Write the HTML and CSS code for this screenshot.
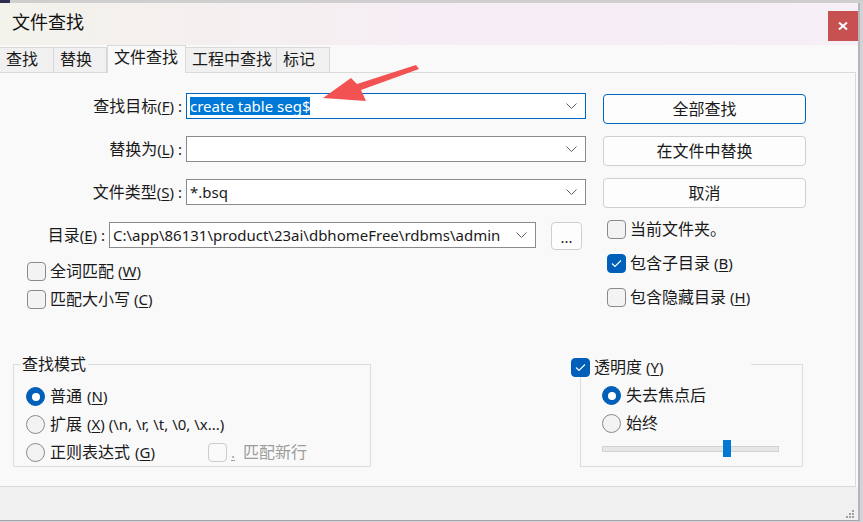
FILE: index.html
```html
<!DOCTYPE html>
<html lang="zh-CN">
<head>
  <meta charset="UTF-8">
  <title>文件查找</title>
  <link rel="stylesheet" href="styles.css">
</head>
<body>
  <!-- 后面编辑器露出的一条 -->
  <div class="editor-edge"></div>

  <div class="window">
    <div class="titlebar">
      <span class="title">文件查找</span>
      <div class="close-btn">
        <svg width="10" height="8" viewBox="0 0 10 8"><path d="M1 0.5 L9 7.5 M9 0.5 L1 7.5" stroke="#fff" stroke-width="2"/></svg>
      </div>
    </div>

    <!-- 标签页 -->
    <div class="tabs">
      <div class="tab first">查找</div>
      <div class="tab">替换</div>
      <div class="tab active">文件查找</div>
      <div class="tab">工程中查找</div>
      <div class="tab">标记</div>
    </div>

    <div class="panel">
      <div class="top">
        <div class="left-col">
          <div class="field-row">
            <span class="field-label">查找目标<span class="mn">(<u>F</u>) :</span></span>
            <div class="combo focused">
              <span class="sel">create table seg$</span>
              <svg class="chev" width="11" height="6" viewBox="0 0 11 6"><path d="M0.5 0.5 L5.5 5.5 L10.5 0.5" fill="none" stroke="#5f5f5f"/></svg>
            </div>
          </div>
          <div class="field-row">
            <span class="field-label">替换为<span class="mn">(<u>L</u>) :</span></span>
            <div class="combo">
              <span></span>
              <svg class="chev" width="11" height="6" viewBox="0 0 11 6"><path d="M0.5 0.5 L5.5 5.5 L10.5 0.5" fill="none" stroke="#5f5f5f"/></svg>
            </div>
          </div>
          <div class="field-row">
            <span class="field-label">文件类型<span class="mn">(<u>S</u>) :</span></span>
            <div class="combo">
              <span>*.bsq</span>
              <svg class="chev" width="11" height="6" viewBox="0 0 11 6"><path d="M0.5 0.5 L5.5 5.5 L10.5 0.5" fill="none" stroke="#5f5f5f"/></svg>
            </div>
          </div>
          <div class="field-row dir-row">
            <span class="field-label short">目录<span class="mn">(<u>E</u>) :</span></span>
            <div class="combo wide">
              <span>C:\app\86131\product\23ai\dbhomeFree\rdbms\admin</span>
              <svg class="chev" width="11" height="6" viewBox="0 0 11 6"><path d="M0.5 0.5 L5.5 5.5 L10.5 0.5" fill="none" stroke="#5f5f5f"/></svg>
            </div>
            <div class="dots-btn">...</div>
          </div>

          <div class="checks">
            <div class="check"><span class="box"></span>全词匹配<span class="mn">(<u>W</u>)</span></div>
            <div class="check"><span class="box"></span>匹配大小写<span class="mn">(<u>C</u>)</span></div>
          </div>
        </div>

        <div class="right-col">
          <div class="btn primary">全部查找</div>
          <div class="btn">在文件中替换</div>
          <div class="btn">取消</div>

          <div class="checks right">
            <div class="check"><span class="box"></span>当前文件夹。</div>
            <div class="check"><span class="box on"><svg width="17" height="17" viewBox="0 0 17 17"><path d="M4 8.5 L7 11.5 L13 5.5" fill="none" stroke="#fff" stroke-width="1.1"/></svg></span>包含子目录<span class="mn">(<u>B</u>)</span></div>
            <div class="check"><span class="box"></span>包含隐藏目录<span class="mn">(<u>H</u>)</span></div>
          </div>
        </div>
      </div>

      <div class="groups">
        <fieldset class="group mode">
          <legend>查找模式</legend>
          <div class="group-body">
            <div class="radio"><span class="dot on"></span>普通<span class="mn">(<u>N</u>)</span></div>
            <div class="radio"><span class="dot"></span>扩展<span class="mn">(<u>X</u>) (\n, \r, \t, \0, \x...)</span></div>
            <div class="radio-line">
              <div class="radio wide"><span class="dot"></span>正则表达式<span class="mn">(<u>G</u>)</span></div>
              <div class="check disabled"><span class="box"></span><span class="mn"><u>.</u>&nbsp;</span>匹配新行</div>
            </div>
          </div>
        </fieldset>

        <fieldset class="group opacity">
          <legend>
            <span class="check"><span class="box on"><svg width="17" height="17" viewBox="0 0 17 17"><path d="M4 8.5 L7 11.5 L13 5.5" fill="none" stroke="#fff" stroke-width="1.1"/></svg></span>透明度<span class="mn">(<u>Y</u>)</span></span>
          </legend>
          <div class="group-body">
            <div class="radio"><span class="dot on"></span>失去焦点后</div>
            <div class="radio"><span class="dot"></span>始终</div>
            <div class="slider">
              <div class="track"></div>
              <div class="thumb"></div>
            </div>
          </div>
        </fieldset>
      </div>
    </div>

    <div class="footer">
      <svg class="grip" width="10" height="10" viewBox="0 0 10 10" fill="#a0a0a0">
        <rect x="7" y="1" width="2" height="2"/>
        <rect x="4" y="4" width="2" height="2"/><rect x="7" y="4" width="2" height="2"/>
        <rect x="1" y="7" width="2" height="2"/><rect x="4" y="7" width="2" height="2"/><rect x="7" y="7" width="2" height="2"/>
      </svg>
    </div>
  </div>

  <!-- 截图里画上去的红箭头 -->
  <svg class="arrow" width="863" height="522" viewBox="0 0 863 522">
    <polygon points="416,65 419,69 361,90 366,101 323,98 351,78 357,84" fill="#f25252"/>
  </svg>
</body>
</html>
```

FILE: styles.css
```css
* {
  margin: 0;
  padding: 0;
  box-sizing: border-box;
  text-autospace: no-autospace;
}

body {
  font-family: "Noto Sans", "Noto Sans CJK SC", sans-serif;
  font-size: 16px;
  color: #1a1a1a;
  background: #d3d3d7;
  width: 863px;
  height: 522px;
  overflow: hidden;
  position: relative;
}

u {
  text-decoration: underline;
  text-underline-offset: 2px;
}

/* 助记键那段用纯西文字体，括号才不会变宽 */
.mn {
  font-family: "Noto Sans", sans-serif;
  font-size: 15px;
}

.editor-edge {
  height: 3px;
  background: linear-gradient(90deg, #2e2e4e 0 10px, #cfcfcf 10px);
}

/* 窗口 */
.window {
  width: 860px;
  background: #f9f9f9;
  border-right: 2px solid #b6b6ba;
  border-bottom: 1px solid #a4a4ae;
}

.titlebar {
  height: 42px;
  display: flex;
  justify-content: space-between;
  align-items: flex-start;
  background: linear-gradient(90deg, #f3f2eb, #f6edf5 55%, #f6eff6);
}

.title {
  font-size: 18px;
  line-height: 20px;
  margin: 9px 0 0 12px;
  color: #111;
}

.close-btn {
  width: 30px;
  height: 30px;
  margin-top: 8px;
  background: #c75050;
  display: flex;
  align-items: center;
  justify-content: center;
}

/* 标签页 */
.tabs {
  height: 27px;
  display: flex;
  align-items: flex-end;
}

.tab {
  height: 25px;
  min-width: 53px;
  padding: 0 4px 0 6px;
  line-height: 22px;
  background: #f0f0f0;
  border-top: 1px solid #d9d9d9;
  border-right: 1px solid #d9d9d9;
}

.tab.first {
  min-width: 54px;
}

.tab.active {
  height: 28px;
  margin-bottom: -1px;
  padding: 0 7px 0 6px;
  background: #f9f9f9;
  border-left: 1px solid #d9d9d9;
  position: relative;
  z-index: 1;
}

.panel {
  width: 856px;
  height: 415px;
  border: 1px solid #dadada;
  border-left: none;
  padding-top: 20px;
}

.top {
  display: flex;
}

.left-col {
  width: 590px;
}

.right-col {
  padding: 1px 0 0 13px;
}

/* 输入行 */
.field-row {
  display: flex;
  align-items: flex-start;
  height: 26px;
  margin-bottom: 17px;
}

.field-label {
  width: 182px;
  text-align: right;
  line-height: 26px;
  white-space: nowrap;
}

.field-label.short {
  width: 105px;
}

.combo {
  width: 400px;
  height: 26px;
  margin-left: 4px;
  padding: 0 8px 0 3px;
  background: #fff;
  border: 1px solid #8a8a8a;
  display: flex;
  align-items: center;
  justify-content: space-between;
  font-size: 15px;
  line-height: 24px;
  white-space: nowrap;
}

.combo.focused {
  border-color: #0067c0;
}

.combo.wide {
  width: 427px;
}

.sel {
  background: #0078d7;
  color: #fff;
  line-height: 18px;
}

.dir-row {
  margin-bottom: 14px;
}

.dots-btn {
  width: 31px;
  height: 28px;
  margin-left: 15px;
  border: 1px solid #cfcfcf;
  border-radius: 4px;
  background: #fdfdfd;
  text-align: center;
  font-size: 15px;
  line-height: 28px;
}

/* 按钮 */
.btn {
  width: 203px;
  height: 30px;
  margin-bottom: 12px;
  border: 1px solid #d0d0d0;
  border-radius: 4px;
  background: #fdfdfd;
  text-align: center;
  line-height: 28px;
}

.btn.primary {
  border-color: #0067c0;
}

/* 复选框 */
.checks {
  padding-left: 27px;
}

.checks.right {
  padding-left: 4px;
  margin-top: 6px;
}

.check {
  display: flex;
  align-items: center;
  gap: 4px;
  height: 19px;
  line-height: 19px;
  margin-bottom: 9px;
  white-space: nowrap;
}

.checks.right .check {
  margin-bottom: 15px;
}

.checks .check:last-child {
  margin-bottom: 0;
}

.box {
  width: 19px;
  height: 19px;
  border: 1px solid #8a8a8a;
  border-radius: 4px;
  background: #f3f3f3;
  display: flex;
  align-items: center;
  justify-content: center;
  flex-shrink: 0;
}

.box.on {
  background: #005fb8;
  border-color: #005fb8;
}

.check.disabled {
  color: #9c9c9c;
}

.check.disabled .box {
  border-color: #cccccc;
  background: #f9f9f9;
}

/* 下面两个分组 */
.groups {
  display: flex;
  align-items: flex-start;
  margin-top: 45px;
}

.group {
  height: 113px;
  border: 1px solid #dcdcdc;
  padding: 0;
}

.group legend {
  line-height: 20px;
  height: 20px;
}

.mode {
  width: 358px;
  margin-left: 13px;
}

.mode legend {
  margin-left: 6px;
  padding: 0 2px;
}

.mode .group-body {
  padding: 13px 0 0 12px;
}

.opacity {
  width: 223px;
  margin-left: 209px;
}

.opacity legend {
  width: 180px;
  margin-left: -10px;
}

.opacity legend .check {
  margin: 0;
  height: 20px;
  position: relative;
  top: 3px;
}

.opacity .group-body {
  padding: 12px 0 0 21px;
}

.radio {
  display: flex;
  align-items: center;
  gap: 5px;
  height: 19px;
  line-height: 19px;
  margin-bottom: 9px;
  white-space: nowrap;
}

.radio-line {
  display: flex;
}

.radio.wide {
  width: 182px;
}

.dot {
  width: 19px;
  height: 19px;
  border: 1px solid #8a8a8a;
  border-radius: 50%;
  background: #f3f3f3;
  display: flex;
  align-items: center;
  justify-content: center;
  flex-shrink: 0;
}

.dot.on {
  background: #005fb8;
  border-color: #005fb8;
}

.dot.on::after {
  content: "";
  width: 8px;
  height: 8px;
  border-radius: 50%;
  background: #fff;
}

.slider {
  position: relative;
  width: 177px;
  height: 17px;
  margin-top: -2px;
  padding-top: 6px;
}

.track {
  height: 6px;
  background: #e6e6e6;
  border: 1px solid #d2d2d2;
}

.thumb {
  position: absolute;
  top: 0;
  left: 121px;
  width: 8px;
  height: 17px;
  background: #0078d4;
}

/* 底部 */
.footer {
  height: 33px;
  background: #f0f0f0;
  display: flex;
  justify-content: flex-end;
  align-items: flex-end;
  padding: 0 3px 1px 0;
}

.arrow {
  position: absolute;
  top: 0;
  left: 0;
  pointer-events: none;
}
```
